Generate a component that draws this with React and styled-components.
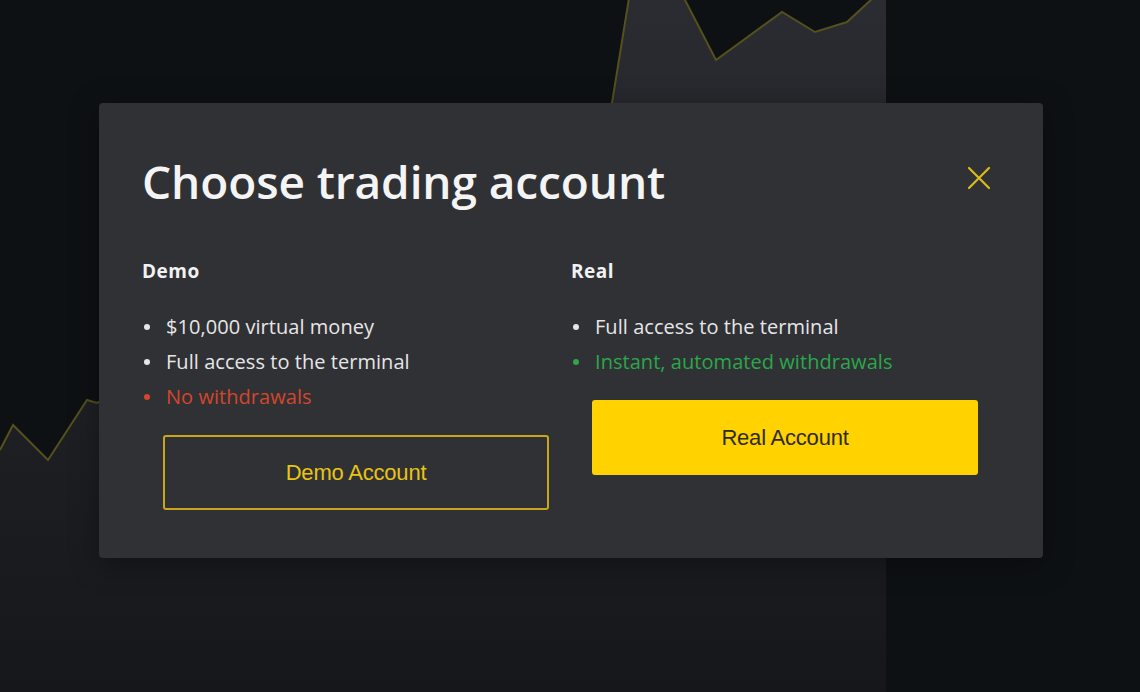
import React from 'react'
import styled, { createGlobalStyle } from 'styled-components'

const GlobalStyle = createGlobalStyle`
  html, body {
    margin: 0;
    padding: 0;
    background: #0e1113;
  }
  * {
    box-sizing: border-box;
  }
`;

const Page = styled.div`
  position: relative;
  width: 100vw;
  height: 100vh;
  overflow: hidden;
  background: #0e1113;
  display: flex;
  justify-content: center;
  align-items: flex-start;
  padding: 103px 0 0 2px;
  font-family: "Open Sans", "Noto Sans", sans-serif;
`;

const ChartLayer = styled.svg`
  position: absolute;
  inset: 0;
  width: 100%;
  height: 100%;
`;

const Modal = styled.div`
  position: relative;
  width: 944px;
  background: #303135;
  border-radius: 4px;
  padding: 44px 64px 48px 43px;
  box-shadow: 0 6px 30px rgba(0, 0, 0, 0.35);
`;

const Header = styled.div`
  display: flex;
  justify-content: space-between;
  align-items: center;
`;

const Title = styled.h1`
  margin: 0;
  font-size: 46px;
  font-weight: 600;
  line-height: 68px;
  color: #f4f4f4;
  letter-spacing: -0.1px;
`;

const CloseButton = styled.button`
  border: none;
  background: transparent;
  padding: 0;
  width: 26px;
  height: 26px;
  margin: -6px -13px 0 0;
  display: flex;
  align-items: center;
  justify-content: center;
  cursor: pointer;
`;

const Columns = styled.div`
  display: grid;
  grid-template-columns: 408px 408px;
  column-gap: 21px;
  margin-top: 44px;
  align-items: start;
`;

const Column = styled.div`
  display: flex;
  flex-direction: column;
`;

const ColumnTitle = styled.h3`
  margin: 0;
  font-size: 19px;
  font-weight: 700;
  line-height: 24px;
  letter-spacing: 0.5px;
  color: #f2f2f2;
`;

const List = styled.ul`
  list-style: none;
  margin: 26px 0 0;
  padding: 0;
`;

const Item = styled.li`
  position: relative;
  padding-left: 24px;
  font-size: 20px;
  line-height: 35px;
  letter-spacing: 0.05px;
  color: ${(p) => p.$color || '#e6e6e6'};

  &::before {
    content: '';
    position: absolute;
    left: 2px;
    top: 50%;
    width: 6px;
    height: 6px;
    margin-top: -3px;
    border-radius: 50%;
    background: currentColor;
  }
`;

const AccountButton = styled.button`
  margin: 21px 0 0 21px;
  width: 386px;
  height: 75px;
  border-radius: 3px;
  font-family: "Liberation Sans", Arial, sans-serif;
  font-size: 22px;
  letter-spacing: -0.2px;
  cursor: pointer;
  border: 2px solid ${(p) => (p.$primary ? '#ffd200' : '#c9a71c')};
  background: ${(p) => (p.$primary ? '#ffd200' : 'transparent')};
  color: ${(p) => (p.$primary ? '#2e2b22' : '#e8c415')};
`;

function BackgroundChart() {
  return (
    <ChartLayer viewBox="0 0 1140 692" preserveAspectRatio="none">
      <defs>
        <linearGradient id="fill" x1="0" y1="0" x2="0" y2="1">
          <stop offset="0" stopColor="#2b2c31" />
          <stop offset="1" stopColor="#16171b" />
        </linearGradient>
      </defs>
      <path
        d="M0 450 L13 425 L48 460 L87 400 L97 403 L300 300 L612 103 L629 -2 L684 -2 L716 60 L782 12 L815 32 L847 22 L873 -2 L886 -2 L886 692 L0 692 Z"
        fill="url(#fill)"
      />
      <path
        d="M0 450 L13 425 L48 460 L87 400 L97 403 L300 300 L612 103 L629 -2 M684 -2 L716 60 L782 12 L815 32 L847 22 L873 -2"
        fill="none"
        stroke="#55501d"
        strokeWidth="2"
      />
    </ChartLayer>
  );
}

function CloseIcon() {
  return (
    <svg width="24" height="24" viewBox="0 0 24 24">
      <path d="M2 2 L22 22 M22 2 L2 22" stroke="#d8bb1c" strokeWidth="2.2" strokeLinecap="round" />
    </svg>
  );
}

const demoItems = [
  { text: '$10,000 virtual money' },
  { text: 'Full access to the terminal' },
  { text: 'No withdrawals', color: '#d3462c' },
];

const realItems = [
  { text: 'Full access to the terminal' },
  { text: 'Instant, automated withdrawals', color: '#2aa84a' },
];

export default function App() {
  return (
    <>
      <GlobalStyle />
      <Page>
        <BackgroundChart />
        <Modal>
          <Header>
            <Title>Choose trading account</Title>
            <CloseButton aria-label="Close">
              <CloseIcon />
            </CloseButton>
          </Header>
          <Columns>
            <Column>
              <ColumnTitle>Demo</ColumnTitle>
              <List>
                {demoItems.map((item) => (
                  <Item key={item.text} $color={item.color}>{item.text}</Item>
                ))}
              </List>
              <AccountButton>Demo Account</AccountButton>
            </Column>
            <Column>
              <ColumnTitle>Real</ColumnTitle>
              <List>
                {realItems.map((item) => (
                  <Item key={item.text} $color={item.color}>{item.text}</Item>
                ))}
              </List>
              <AccountButton $primary>Real Account</AccountButton>
            </Column>
          </Columns>
        </Modal>
      </Page>
    </>
  );
}
